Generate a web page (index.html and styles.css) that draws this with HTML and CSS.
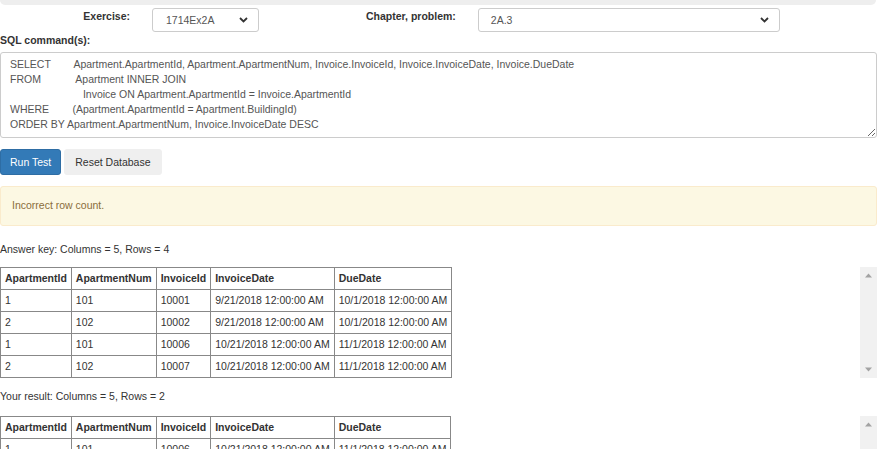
FILE: index.html
```html
<!DOCTYPE html>
<html>
<head>
<meta charset="utf-8">
<link rel="stylesheet" href="styles.css">
</head>
<body>
<div class="page">
  <div class="topbar"></div>
  <div class="pick-row">
    <label class="pick-label first">Exercise:</label>
    <div class="select small"><span>1714Ex2A</span><svg width="9" height="6" viewBox="0 0 9 6"><path d="M1 1 L4.5 4.5 L8 1" fill="none" stroke="#333" stroke-width="1.8"/></svg></div>
    <label class="pick-label second">Chapter, problem:</label>
    <div class="select wide"><span>2A.3</span><svg width="9" height="6" viewBox="0 0 9 6"><path d="M1 1 L4.5 4.5 L8 1" fill="none" stroke="#333" stroke-width="1.8"/></svg></div>
  </div>
  <div class="sql-label">SQL command(s):</div>
  <textarea class="sql" spellcheck="false">SELECT        Apartment.ApartmentId, Apartment.ApartmentNum, Invoice.InvoiceId, Invoice.InvoiceDate, Invoice.DueDate
FROM            Apartment INNER JOIN
                         Invoice ON Apartment.ApartmentId = Invoice.ApartmentId
WHERE        (Apartment.ApartmentId = Apartment.BuildingId)
ORDER BY Apartment.ApartmentNum, Invoice.InvoiceDate DESC</textarea>
  <div class="buttons">
    <button class="btn primary">Run Test</button>
    <button class="btn plain">Reset Database</button>
  </div>
  <div class="alert">Incorrect row count.</div>

  <p class="result-label">Answer key: Columns = 5, Rows = 4</p>
  <div class="result">
    <table>
      <tr><th>ApartmentId</th><th>ApartmentNum</th><th>InvoiceId</th><th>InvoiceDate</th><th>DueDate</th></tr>
      <tr><td>1</td><td>101</td><td>10001</td><td>9/21/2018 12:00:00 AM</td><td>10/1/2018 12:00:00 AM</td></tr>
      <tr><td>2</td><td>102</td><td>10002</td><td>9/21/2018 12:00:00 AM</td><td>10/1/2018 12:00:00 AM</td></tr>
      <tr><td>1</td><td>101</td><td>10006</td><td>10/21/2018 12:00:00 AM</td><td>11/1/2018 12:00:00 AM</td></tr>
      <tr><td>2</td><td>102</td><td>10007</td><td>10/21/2018 12:00:00 AM</td><td>11/1/2018 12:00:00 AM</td></tr>
    </table>
    <div class="vscroll">
      <svg width="17" height="17" viewBox="0 0 17 17"><polygon points="5,10.5 8.5,6.5 12,10.5" fill="#a3a3a3"/></svg>
      <svg width="17" height="17" viewBox="0 0 17 17"><polygon points="5,6.5 8.5,10.5 12,6.5" fill="#a3a3a3"/></svg>
    </div>
  </div>

  <p class="result-label">Your result: Columns = 5, Rows = 2</p>
  <div class="result">
    <table>
      <tr><th>ApartmentId</th><th>ApartmentNum</th><th>InvoiceId</th><th>InvoiceDate</th><th>DueDate</th></tr>
      <tr><td>1</td><td>101</td><td>10006</td><td>10/21/2018 12:00:00 AM</td><td>11/1/2018 12:00:00 AM</td></tr>
      <tr><td>2</td><td>102</td><td>10007</td><td>10/21/2018 12:00:00 AM</td><td>11/1/2018 12:00:00 AM</td></tr>
    </table>
    <div class="vscroll">
      <svg width="17" height="17" viewBox="0 0 17 17"><polygon points="5,10.5 8.5,6.5 12,10.5" fill="#a3a3a3"/></svg>
      <svg width="17" height="17" viewBox="0 0 17 17"><polygon points="5,6.5 8.5,10.5 12,6.5" fill="#a3a3a3"/></svg>
    </div>
  </div>
</div>
</body>
</html>
```
FILE: styles.css
```css
html, body {
  margin: 0;
  padding: 0;
  overflow: hidden;
  background: #fff;
}
body {
  font-family: "Liberation Sans", Arial, sans-serif;
  font-size: 10.5px;
  line-height: 15px;
  color: #333;
}
.page {
  width: 877px;
}
.topbar {
  height: 5px;
  width: 876px;
  background: #eee;
  border-radius: 0 0 5px 5px;
}
.pick-row {
  display: flex;
  align-items: flex-start;
  margin-top: 3px;
}
.pick-label {
  font-weight: bold;
  line-height: 15px;
  padding-top: 1px;
}
.pick-label.first {
  width: 130px;
  text-align: right;
}
.pick-label.second {
  margin-left: 107px;
}
.select {
  box-sizing: border-box;
  height: 24px;
  border: 1px solid #ccc;
  border-radius: 3px;
  display: flex;
  align-items: center;
  justify-content: space-between;
  padding: 0 10px 0 13px;
  color: #555;
  background: #fff;
  margin-left: 22px;
}
.select.small { width: 107px; }
.select.wide { width: 302px; padding-left: 12px; }
.select svg { display: block; }
.sql-label {
  font-weight: bold;
  margin: 1px 0 4px;
}
.sql {
  display: block;
  box-sizing: border-box;
  width: 877px;
  height: 86px;
  margin: 0;
  padding: 4px 9px;
  border: 1px solid #ccc;
  border-radius: 3px;
  font-family: "Liberation Sans", Arial, sans-serif;
  font-size: 10.5px;
  line-height: 15px;
  color: #555;
  white-space: pre;
  overflow: hidden;
  resize: vertical;
}
.buttons {
  display: flex;
  gap: 3px;
  margin-top: 11px;
}
.btn {
  box-sizing: border-box;
  height: 26px;
  font-family: "Liberation Sans", Arial, sans-serif;
  font-size: 10.5px;
  line-height: 15px;
  padding: 0 10px;
  border-radius: 3px;
  border: 1px solid transparent;
  white-space: nowrap;
}
.btn.primary {
  background: #337ab7;
  border-color: #2e6da4;
  color: #fff;
  padding: 0 9px;
}
.btn.plain {
  background: #efefef;
  border-color: #efefef;
  color: #333;
}
.alert {
  margin-top: 11px;
  margin-bottom: 16px;
  box-sizing: border-box;
  width: 877px;
  height: 40px;
  padding: 11px 11px;
  background: #fcf8e3;
  border: 1px solid #faebcc;
  border-radius: 3px;
  color: #8a6d3b;
}
.result-label {
  margin: 0 0 10px;
}
.result {
  display: flex;
  justify-content: space-between;
  align-items: stretch;
  margin-bottom: 11px;
}
.result + .result-label {
  margin-bottom: 12px;
}
table {
  border-collapse: collapse;
  border: 1px solid #888;
  align-self: flex-start;
}
th, td {
  border: 1px solid #888;
  padding: 3px 4px;
  text-align: left;
  white-space: nowrap;
  height: 15px;
}
th { font-weight: bold; }
.vscroll {
  width: 17px;
  background: #f1f1f1;
  display: flex;
  flex-direction: column;
  justify-content: space-between;
}
.vscroll svg { display: block; }
```
